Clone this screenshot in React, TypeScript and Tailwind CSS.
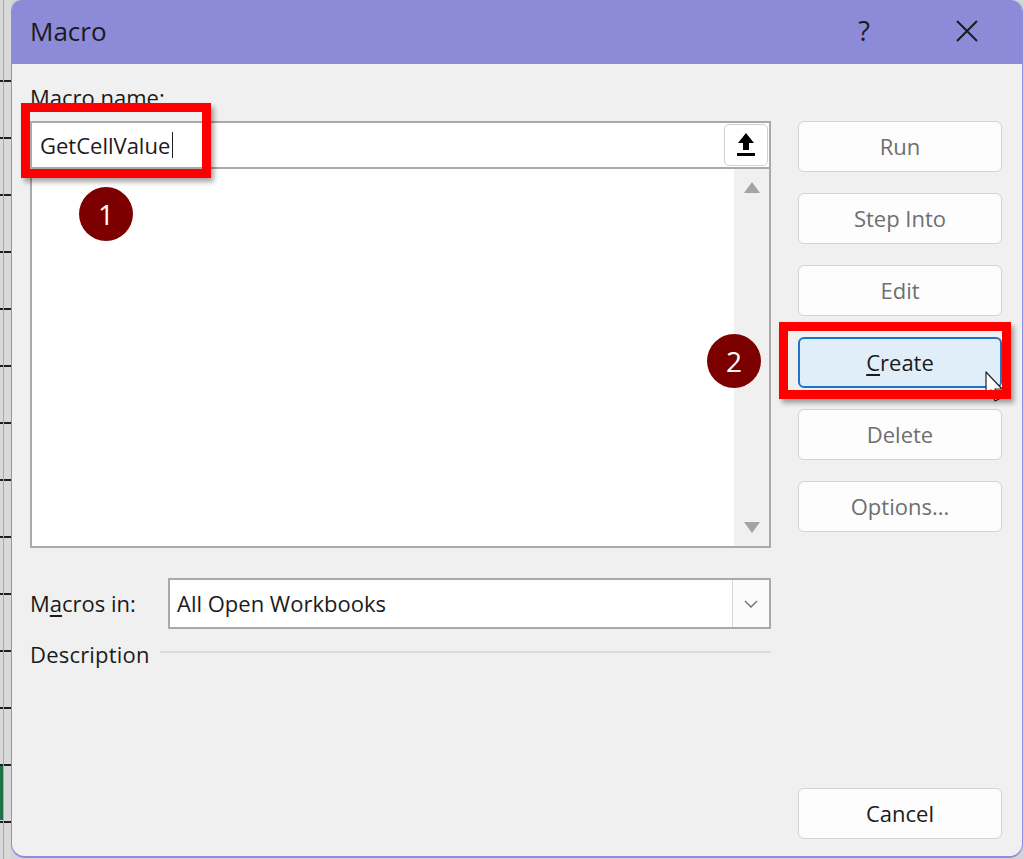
import React from "react";

function ExcelStrip() {
  const rows = Array.from({ length: 14 });
  return (
    <div className="relative w-[11px] h-full bg-[#d9d9d9] shrink-0 flex flex-col">
      <div className="absolute left-[3px] top-0 h-full w-px bg-[#a8a8a8]" />
      <div className="h-[80px] shrink-0" />
      {rows.map((_, i) => (
        <div key={i} className="h-[57px] shrink-0 border-t-[2px] border-[#1e1e1e]" />
      ))}
      <div className="absolute left-0 top-[766px] h-[54px] w-[3px] bg-[#217346]" />
    </div>
  );
}

function UploadIcon() {
  return (
    <svg width="18" height="24" viewBox="0 0 18 24">
      <path d="M9 0 L17 10 L12 10 L12 17 L6 17 L6 10 L1 10 Z" fill="#000" />
      <rect x="0" y="20" width="18" height="3" fill="#000" />
    </svg>
  );
}

function Btn({ label, disabled = true }: { label: React.ReactNode; disabled?: boolean }) {
  return (
    <div
      className={`h-[51px] rounded-[6px] border border-[#d3d3d3] bg-[#fdfdfd] flex items-center justify-center text-[22px] ${
        disabled ? "text-[#6f6f6f]" : "text-[#1b1b1b]"
      }`}
    >
      {label}
    </div>
  );
}

export default function App() {
  return (
    <div className="relative w-[1024px] h-[859px] flex bg-[#d4d4d4] overflow-hidden font-['Open_Sans',sans-serif]">
      <ExcelStrip />
      <div className="w-[1012px] h-[858px] flex flex-col rounded-tl-[10px] rounded-tr-[12px] rounded-b-[14px] border-x-[1.5px] border-b-[2px] border-[#8f8ce0] bg-[#f0f0f0] overflow-hidden">
        {/* title bar */}
        <div className="h-[64px] shrink-0 bg-[#8d8ad8] flex items-center pl-[18px] pr-[44px] pb-[3px] text-[#1b1b1b]">
          <div className="flex-1 text-[26px] leading-none">Macro</div>
          <div className="text-[27px] leading-none font-normal mr-[86px]">?</div>
          <svg width="22" height="22" viewBox="0 0 22 22">
            <path d="M1 1 L21 21 M21 1 L1 21" stroke="#1b1b1b" strokeWidth="2" />
          </svg>
        </div>

        {/* body */}
        <div className="flex-1 flex pl-[18px] pr-[19px] gap-[27px] text-[22px] text-[#1b1b1b]">
          {/* left column */}
          <div className="w-[741px] flex flex-col">
            <div className="mt-[18px] h-[30px] leading-[30px]">Macro name:</div>
            <div className="mt-[9px] h-[427px] flex flex-col border-[2px] border-[#a9a9a9] bg-white">
              <div className="h-[46px] shrink-0 border-b-[2px] border-[#a9a9a9] flex items-center pl-[8px] pr-[1px]">
                <div className="flex-1 flex items-center">
                  <span>GetCellValue</span>
                  <span className="ml-[2px] w-px h-[26px] bg-[#1b1b1b]" />
                </div>
                <div className="w-[44px] h-[42px] rounded-[5px] border border-[#d0d0d0] bg-white flex items-center justify-center">
                  <UploadIcon />
                </div>
              </div>
              <div className="flex-1 flex">
                <div className="flex-1" />
                <div className="w-[35px] bg-[#f0f0f0] flex flex-col items-center justify-between py-[13px]">
                  <svg width="16" height="11" viewBox="0 0 16 11">
                    <path d="M8 0 L16 11 L0 11 Z" fill="#a3a3a3" />
                  </svg>
                  <svg width="16" height="11" viewBox="0 0 16 11">
                    <path d="M0 0 L16 0 L8 11 Z" fill="#a3a3a3" />
                  </svg>
                </div>
              </div>
            </div>
            <div className="mt-[30px] h-[51px] flex items-center">
              <div className="w-[138px]">
                M<span className="underline underline-offset-[3px]">a</span>cros in:
              </div>
              <div className="flex-1 h-full border-[2px] border-[#a9a9a9] bg-white flex items-center">
                <div className="flex-1 pl-[7px]">All Open Workbooks</div>
                <div className="w-[37px] h-full border-l border-[#d6d6d6] bg-[#fbfbfb] flex items-center justify-center">
                  <svg width="14" height="8" viewBox="0 0 14 8">
                    <path d="M1 1 L7 7 L13 1" stroke="#6a6a6a" strokeWidth="1.3" fill="none" />
                  </svg>
                </div>
              </div>
            </div>
            <div className="mt-[10px] flex items-center">
              <div className="leading-[30px] tracking-[0.2px]">Description</div>
              <div className="flex-1 ml-[10px] h-[2px] bg-[#dddddd] -mt-[4px]" />
            </div>
          </div>

          {/* right column */}
          <div className="w-[204px] flex flex-col pt-[57px] pb-[17px] gap-[21px]">
            <Btn label="Run" />
            <Btn label="Step Into" />
            <Btn label="Edit" />
            <div className="h-[51px] rounded-[6px] border-[2px] border-[#1f74c8] bg-[#e0eef9] flex items-center justify-center text-[22px] text-[#1b1b1b]">
              <span>
                <span className="underline underline-offset-[3px]">C</span>reate
              </span>
            </div>
            <Btn label="Delete" />
            <Btn label="Options..." />
            <div className="mt-auto">
              <Btn label="Cancel" disabled={false} />
            </div>
          </div>
        </div>
      </div>

      {/* annotations */}
      <div className="absolute left-[21px] top-[103px] w-[190px] h-[75px] border-[9px] border-[#ff0000] shadow-[3px_4px_5px_rgba(0,0,0,0.35)]" />
      <div className="absolute left-[79px] top-[187px] w-[54px] h-[54px] rounded-full bg-[#7d0000] flex items-center justify-center text-white text-[28px] leading-none">
        1
      </div>
      <div className="absolute left-[707px] top-[334px] w-[54px] h-[54px] rounded-full bg-[#7d0000] flex items-center justify-center text-white text-[28px] leading-none">
        2
      </div>
      <svg className="absolute left-[985px] top-[371px]" width="20" height="34" viewBox="0 0 20 34">
        <path d="M1 1 L1 24 L6 19 L10 30 L14 28 L10 18 L17 18 Z" fill="#fff" stroke="#222" strokeWidth="1.2" strokeLinejoin="round" />
      </svg>
      <div className="absolute left-[779px] top-[322px] w-[232px] h-[77px] border-[9px] border-[#ff0000] shadow-[3px_4px_5px_rgba(0,0,0,0.35)]" />
    </div>
  );
}
